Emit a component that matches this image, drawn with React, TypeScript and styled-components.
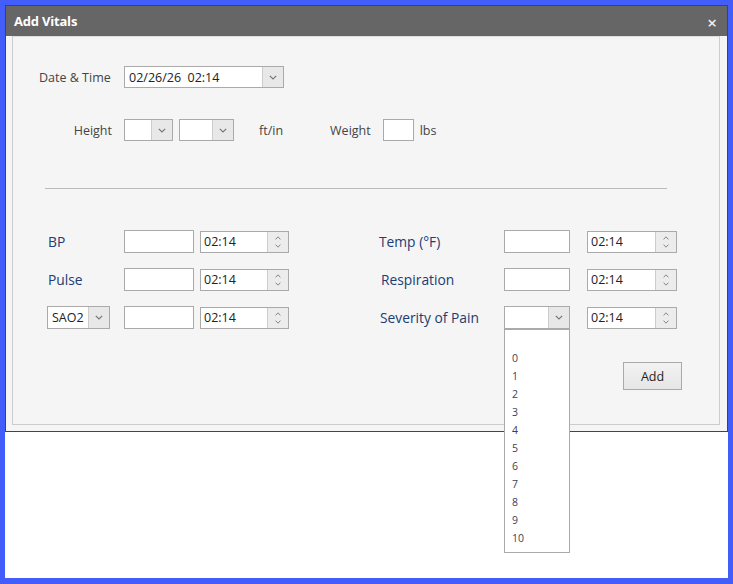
import styled, { createGlobalStyle } from "styled-components";

const GlobalStyle = createGlobalStyle`
  html, body {
    margin: 0;
    padding: 0;
    background: #ffffff;
  }
  body {
    font-family: "Open Sans", "DejaVu Sans", sans-serif;
  }
`;

const Frame = styled.div`
  box-sizing: border-box;
  width: 733px;
  height: 584px;
  border: 5px solid #435dfa;
  border-bottom-width: 6px;
  background: #ffffff;
`;

const Dialog = styled.div`
  box-sizing: border-box;
  height: 427px;
  border: 1px solid #1e479b;
  background: #f5f5f5;
  display: flex;
  flex-direction: column;
`;

const TitleBar = styled.div`
  height: 31px;
  background: #666666;
  display: flex;
  align-items: center;
  padding: 0 10px 0 8px;
  color: #ffffff;
`;

const Title = styled.div`
  font-size: 13px;
  font-weight: 700;
  letter-spacing: -0.2px;
`;

const Close = styled.div`
  margin-left: auto;
  font-size: 17px;
  font-weight: 600;
  color: #eeeeee;
  line-height: 1;
  margin-top: 2px;
`;

const Body = styled.div`
  flex: 1;
  padding: 0 7px 6px 6px;
`;

const Panel = styled.div`
  box-sizing: border-box;
  height: 389px;
  border: 1px solid #cccccc;
  border-top-color: #dddddd;
  padding-top: 29px;
  display: flex;
  flex-direction: column;
`;

const Row = styled.div<{ $top?: number }>`
  display: flex;
  align-items: center;
  margin-top: ${(p) => p.$top ?? 0}px;
  padding-left: 26px;
`;

const FieldLabel = styled.div<{ $align?: "left" | "right" }>`
  width: 85px;
  box-sizing: border-box;
  text-align: ${(p) => p.$align ?? "left"};
  padding-right: ${(p) => (p.$align === "right" ? 12 : 0)}px;
  font-size: 12.5px;
  color: #444444;
`;

const Unit = styled.div<{ $left: number }>`
  margin-left: ${(p) => p.$left}px;
  font-size: 12.5px;
  color: #444444;
`;

const SelectBox = styled.div<{ $w: number; $h?: number }>`
  position: relative;
  box-sizing: border-box;
  width: ${(p) => p.$w}px;
  height: ${(p) => p.$h ?? 22}px;
  border: 1px solid #aaaaaa;
  background: #ffffff;
  display: flex;
`;

const SelectText = styled.div`
  flex: 1;
  display: flex;
  align-items: center;
  padding-left: 4px;
  font-size: 12.5px;
  color: #222222;
  white-space: pre;
`;

const ArrowArea = styled.div`
  width: 20px;
  border-left: 1px solid #cccccc;
  background: #e8e8e8;
  display: flex;
  align-items: center;
  justify-content: center;
`;

const TextBox = styled.div<{ $w: number; $h?: number }>`
  box-sizing: border-box;
  width: ${(p) => p.$w}px;
  height: ${(p) => p.$h ?? 23}px;
  border: 1px solid #aaaaaa;
  background: #ffffff;
`;

const Divider = styled.div`
  margin: 47px 0 0 32px;
  width: 622px;
  height: 1px;
  background: #bbbbbb;
`;

const VitalsGrid = styled.div`
  margin: 41px 0 0 34px;
  display: grid;
  grid-template-columns: 77px 76px 178px 126px 83px 90px;
  grid-auto-rows: 23px;
  row-gap: 15px;
  align-items: center;
`;

const VitalLabel = styled.div<{ $indent?: number }>`
  padding-left: ${(p) => p.$indent ?? 1}px;
  font-size: 13.8px;
  color: #203c74;
`;

const TimeBox = styled.div<{ $w: number }>`
  box-sizing: border-box;
  width: ${(p) => p.$w}px;
  height: 22px;
  border: 1px solid #aaaaaa;
  background: #ffffff;
  display: flex;
`;

const TimeText = styled.div`
  flex: 1;
  display: flex;
  align-items: center;
  padding-left: 3px;
  font-size: 12.5px;
  color: #222222;
`;

const SpinArea = styled.div`
  width: 20px;
  border-left: 1px solid #cccccc;
  background: #ececec;
  display: flex;
  flex-direction: column;
  align-items: center;
  justify-content: center;
  gap: 4px;
`;

const DropList = styled.div`
  position: absolute;
  top: 100%;
  left: -1px;
  box-sizing: border-box;
  width: 66px;
  height: 224px;
  margin-top: 1px;
  border: 1px solid #aaaaaa;
  background: #ffffff;
  padding-top: 19px;
  z-index: 5;
`;

const DropItem = styled.div`
  height: 18px;
  line-height: 18px;
  padding-left: 7px;
  font-size: 10.5px;
  color: #3a3f5c;
`;

const ButtonRow = styled.div`
  margin-top: 33px;
  display: flex;
  justify-content: flex-end;
  padding-right: 37px;
`;

const AddButton = styled.button`
  box-sizing: border-box;
  width: 59px;
  height: 28px;
  border: 1px solid #aaaaaa;
  background: linear-gradient(#f2f2f2, #e6e6e6);
  font-family: "Open Sans", "DejaVu Sans", sans-serif;
  font-size: 12.5px;
  color: #222222;
  padding: 0;
`;

function Chevron() {
  return (
    <svg width="8" height="5" viewBox="0 0 8 5">
      <path d="M0.8 0.8 L4 4 L7.2 0.8" fill="none" stroke="#777" strokeWidth="1.2" />
    </svg>
  );
}

function Select(props: { w: number; h?: number; value?: string; children?: React.ReactNode }) {
  return (
    <SelectBox $w={props.w} $h={props.h}>
      <SelectText>{props.value ?? ""}</SelectText>
      <ArrowArea>
        <Chevron />
      </ArrowArea>
      {props.children}
    </SelectBox>
  );
}

function TimeSpinner(props: { w: number }) {
  return (
    <TimeBox $w={props.w}>
      <TimeText>02:14</TimeText>
      <SpinArea>
        <svg width="6" height="4" viewBox="0 0 6 4">
          <path d="M0.6 3.4 L3 0.8 L5.4 3.4" fill="none" stroke="#888" strokeWidth="1" />
        </svg>
        <svg width="6" height="4" viewBox="0 0 6 4">
          <path d="M0.6 0.6 L3 3.2 L5.4 0.6" fill="none" stroke="#888" strokeWidth="1" />
        </svg>
      </SpinArea>
    </TimeBox>
  );
}

const painLevels = ["0", "1", "2", "3", "4", "5", "6", "7", "8", "9", "10"];

export default function App() {
  return (
    <>
      <GlobalStyle />
      <Frame>
        <Dialog>
          <TitleBar>
            <Title>Add Vitals</Title>
            <Close>×</Close>
          </TitleBar>
          <Body>
            <Panel>
              <Row>
                <FieldLabel>Date &amp; Time</FieldLabel>
                <Select w={160} h={22} value="02/26/26  02:14" />
              </Row>
              <Row $top={31}>
                <FieldLabel $align="right">Height</FieldLabel>
                <Select w={49} />
                <div style={{ width: 6 }} />
                <Select w={55} />
                <Unit $left={25}>ft/in</Unit>
                <Unit $left={47}>Weight</Unit>
                <div style={{ width: 12 }} />
                <TextBox $w={31} $h={22} />
                <Unit $left={6}>lbs</Unit>
              </Row>
              <Divider />
              <VitalsGrid>
                <VitalLabel>BP</VitalLabel>
                <TextBox $w={70} />
                <TimeSpinner w={89} />
                <VitalLabel>Temp (°F)</VitalLabel>
                <TextBox $w={66} />
                <TimeSpinner w={90} />

                <VitalLabel>Pulse</VitalLabel>
                <TextBox $w={70} />
                <TimeSpinner w={89} />
                <VitalLabel $indent={3}>Respiration</VitalLabel>
                <TextBox $w={66} />
                <TimeSpinner w={90} />

                <Select w={63} h={23} value="SAO2" />
                <TextBox $w={70} />
                <TimeSpinner w={89} />
                <VitalLabel $indent={2}>Severity of Pain</VitalLabel>
                <Select w={66} h={23}>
                  <DropList>
                    {painLevels.map((n) => (
                      <DropItem key={n}>{n}</DropItem>
                    ))}
                  </DropList>
                </Select>
                <TimeSpinner w={90} />
              </VitalsGrid>
              <ButtonRow>
                <AddButton>Add</AddButton>
              </ButtonRow>
            </Panel>
          </Body>
        </Dialog>
      </Frame>
    </>
  );
}
